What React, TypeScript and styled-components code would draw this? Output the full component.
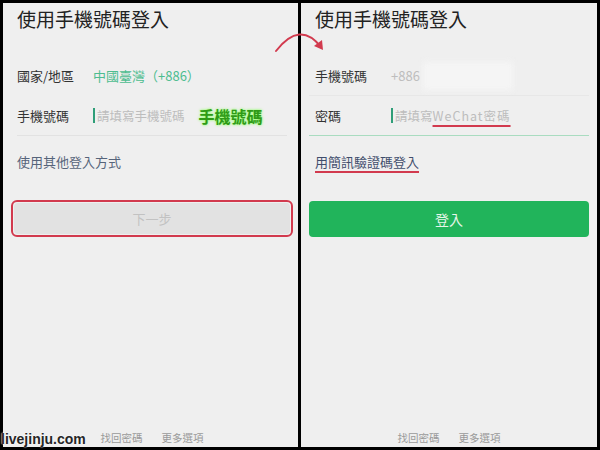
import * as React from "react";
import styled, { createGlobalStyle } from "styled-components";

const palette = {
  black: "#000000",
  panel: "#efefef",
  text: "#222222",
  label: "#333333",
  hint: "#bdbdbd",
  teal: "#4dbd8f",
  green: "#21b45b",
  link: "#56647a",
  red: "#d23a4e",
  foot: "#9a9a9a",
};

const GlobalStyle = createGlobalStyle`
  html, body { margin: 0; padding: 0; background: #000; }
  body { font-family: "Noto Sans CJK TC", "Noto Sans", sans-serif; }
`;

const Screen = styled("div")({
  position: "relative",
  width: 600,
  height: 450,
  boxSizing: "border-box",
  padding: 3,
  display: "flex",
  gap: 3,
  background: palette.black,
  overflow: "hidden",
});

const Panel = styled("div")<{ $left: number; $right: number; $indent: number; $width?: number }>`
  flex: ${(p) => (p.$width ? `0 0 ${p.$width}px` : "1")};
  display: flex;
  flex-direction: column;
  box-sizing: border-box;
  padding: 0 ${(p) => p.$right}px 0 ${(p) => p.$left}px;
  background: ${palette.panel};
  --indent: ${(p) => p.$indent}px;
`;

const Title = styled("div")({
  marginTop: 3,
  paddingLeft: "var(--indent)",
  fontSize: 19,
  lineHeight: "26px",
  color: palette.text,
});

const Form = styled("div")({
  marginTop: 24,
  display: "flex",
  flexDirection: "column",
});

const Row = styled("div")<{ $line?: string }>`
  display: flex;
  align-items: center;
  height: 40px;
  box-sizing: border-box;
  padding-left: var(--indent);
  border-bottom: 1px solid ${(p) => p.$line || "transparent"};
`;

const Label = styled("span")({
  flex: "0 0 76px",
  fontSize: 13,
  color: palette.label,
});

const Value = styled("span")<{ $color: string }>`
  font-size: 13px;
  color: ${(p) => p.$color};
`;

const Cursor = styled("span")({
  width: 2,
  height: 15,
  marginRight: 2,
  background: "#2f9e78",
});

const Hint = styled("span")({
  fontSize: 12.5,
  color: palette.hint,
});

const Marked = styled("span")({
  letterSpacing: 1,
  textDecoration: `underline 2px ${palette.red}`,
  textUnderlineOffset: 4,
});

const Callout = styled("span")({
  marginLeft: 14,
  fontSize: 16,
  fontWeight: 700,
  color: "#2f9a17",
  textShadow: "0 0 3px #9dff7a, 0 0 2px #9dff7a",
});

const Blurred = styled("span")({
  width: 90,
  height: 28,
  marginLeft: 3,
  background: "#f5f5f5",
  filter: "blur(3px)",
});

const Link = styled("div")<{ $marked?: boolean; $color: string }>`
  margin-top: 16px;
  padding-left: var(--indent);
  font-size: 13px;
  line-height: 20px;
  color: ${(p) => p.$color};
  span {
    text-decoration: ${(p) => (p.$marked ? `underline 2px ${palette.red}` : "none")};
    text-underline-offset: 4px;
  }
`;

const Outline = styled("div")({
  marginTop: 28,
  marginLeft: -6,
  marginRight: -6,
  border: `2px solid ${palette.red}`,
  borderRadius: 6,
  padding: 1,
});

const Button = styled("div")<{ $bg: string; $fg: string }>`
  height: 31px;
  display: flex;
  align-items: center;
  justify-content: center;
  border-radius: 4px;
  background: ${(p) => p.$bg};
  color: ${(p) => p.$fg};
  font-size: 13px;
`;

const PrimaryButton = styled(Button)({
  marginTop: 29,
  height: 36,
  fontSize: 14,
});

const Footer = styled("div")({
  marginTop: "auto",
  marginBottom: 1,
  display: "flex",
  justifyContent: "center",
  gap: 19,
  fontSize: 10.5,
  lineHeight: "16px",
  color: palette.foot,
});

const Watermark = styled("div")({
  position: "absolute",
  left: 1,
  bottom: 3,
  fontFamily: '"Liberation Sans", Arial, sans-serif',
  fontWeight: 700,
  fontSize: 14,
  lineHeight: "16px",
  color: "#262626",
  textShadow: "0 0 2px #fff, 0 0 1px #fff",
});

const Arrow = styled("svg")({
  position: "absolute",
  left: 270,
  top: 20,
  overflow: "visible",
});

export default function App() {
  return (
    <Screen>
      <GlobalStyle />
      <Panel $width={295} $left={14} $right={11} $indent={0}>
        <Title>使用手機號碼登入</Title>
        <Form>
          <Row>
            <Label>國家/地區</Label>
            <Value $color={palette.teal}>中國臺灣（+886）</Value>
          </Row>
          <Row $line="#e2e2e2">
            <Label>手機號碼</Label>
            <Cursor />
            <Hint>請填寫手機號碼</Hint>
            <Callout>手機號碼</Callout>
          </Row>
        </Form>
        <Link $color={palette.link}>
          <span>使用其他登入方式</span>
        </Link>
        <Outline>
          <Button $bg="#e2e2e2" $fg="#c2c2c2">
            下一步
          </Button>
        </Outline>
        <Footer>
          <span>找回密碼</span>
          <span>更多選項</span>
        </Footer>
      </Panel>
      <Panel $left={8} $right={8} $indent={6}>
        <Title>使用手機號碼登入</Title>
        <Form>
          <Row $line="#e7e7e7">
            <Label>手機號碼</Label>
            <Value $color={palette.hint}>+886</Value>
            <Blurred />
          </Row>
          <Row $line="#a9dcc0">
            <Label>密碼</Label>
            <Cursor />
            <Hint>
              請填寫<Marked>WeChat密碼</Marked>
            </Hint>
          </Row>
        </Form>
        <Link $color="#3f4d6c" $marked>
          <span>用簡訊驗證碼登入</span>
        </Link>
        <PrimaryButton $bg={palette.green} $fg="#e6f6ea">
          登入
        </PrimaryButton>
        <Footer>
          <span>找回密碼</span>
          <span>更多選項</span>
        </Footer>
      </Panel>
      <Arrow width="60" height="40" viewBox="0 0 60 40">
        <path d="M6 31 Q30 0 51 27" fill="none" stroke={palette.red} strokeWidth="2" strokeLinecap="round" />
        <path d="M44 26 L53 30 L52 20 Z" fill={palette.red} />
      </Arrow>
      <Watermark>livejinju.com</Watermark>
    </Screen>
  );
}
